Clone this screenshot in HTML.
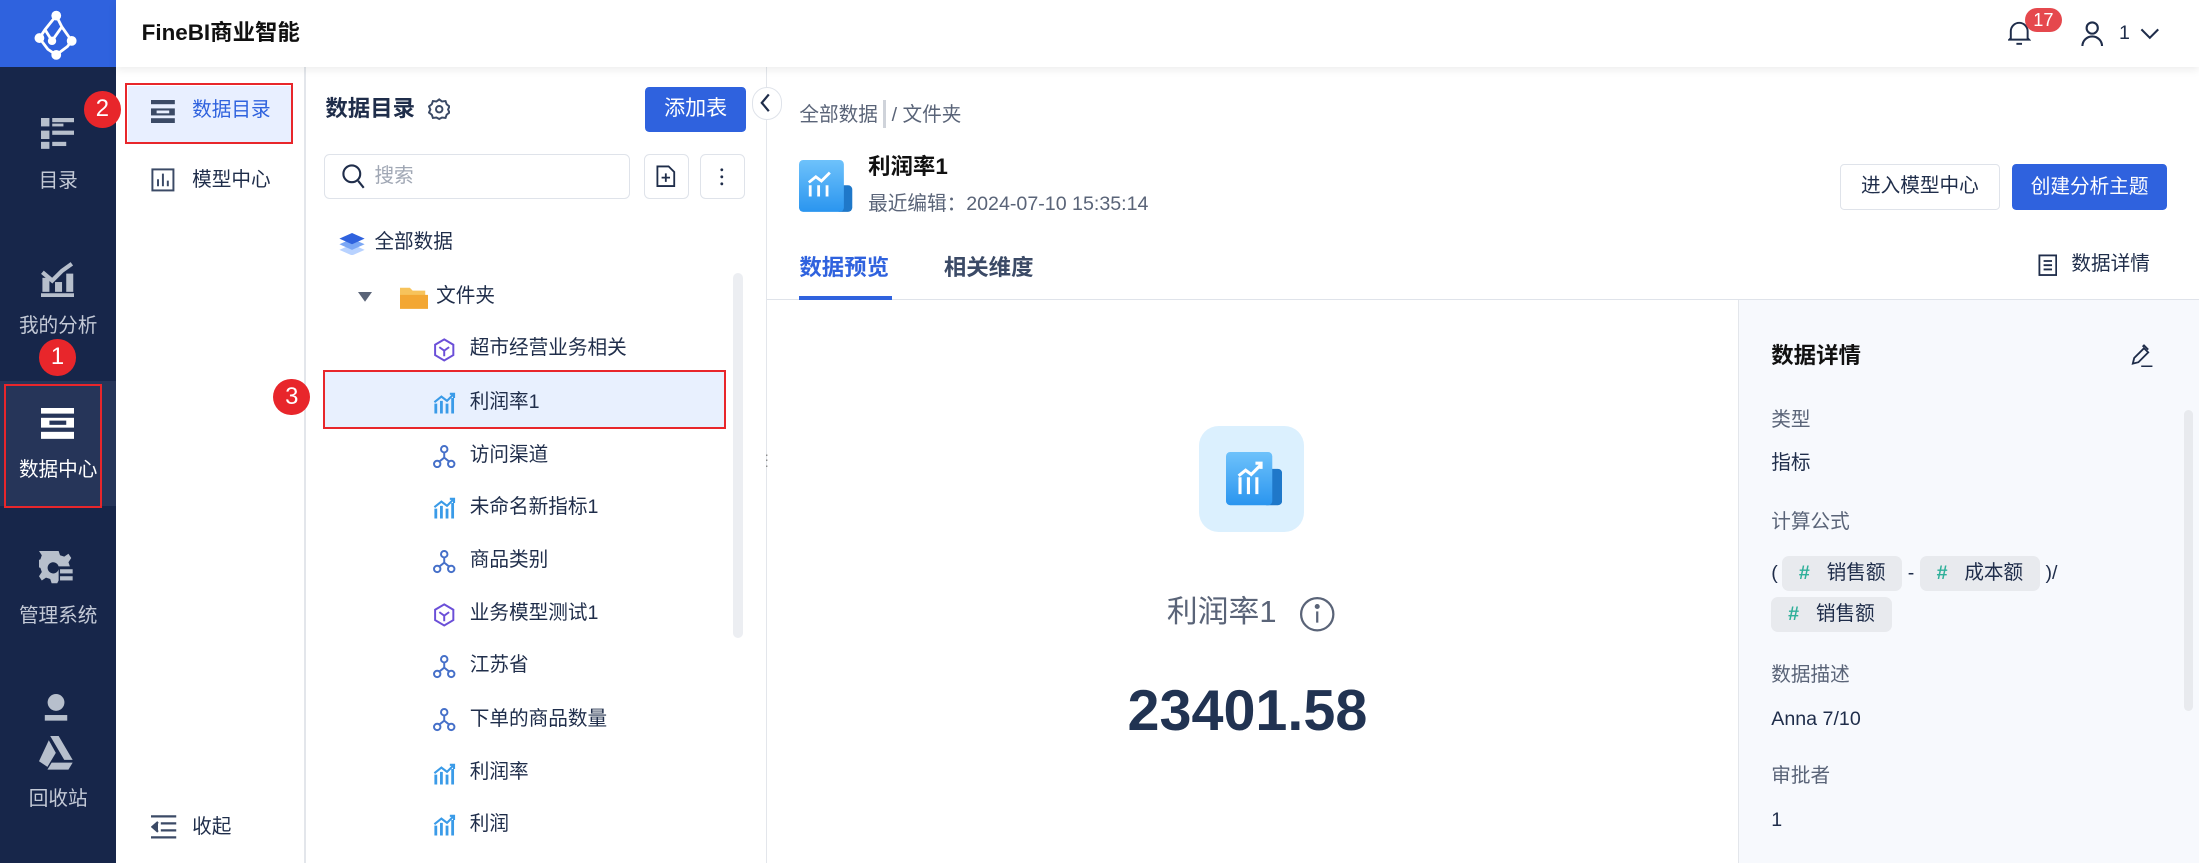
<!DOCTYPE html>
<html><head><meta charset="utf-8"><style>
html,body{margin:0;padding:0;width:2199px;height:863px;overflow:hidden;background:#fff}
#w{zoom:1.40242;width:1568px;height:615.4px;position:relative;font-family:"Liberation Sans","Noto Sans CJK SC",sans-serif;color:#1f2d4a;overflow:hidden}
.a{position:absolute}
.t{position:absolute;white-space:nowrap;line-height:1}
.nav{left:0;top:0;width:83px;height:616px;background:#17264a}
.navt{color:#c3c9d6;font-size:14px;width:83px;text-align:center;left:0}
.red{position:absolute;border:2px solid #e8262b;box-sizing:border-box}
.badge{position:absolute;width:26px;height:26px;border-radius:50%;background:#e8262b;color:#fff;font-size:17px;text-align:center;line-height:26px}
.row{font-size:14px;color:#1f2d4a}
.btn{position:absolute;box-sizing:border-box;border-radius:3px;font-size:14px;text-align:center}
.chip{display:inline-block;background:#e8eaee;border-radius:5px;padding:0 12px;height:25px;line-height:25px;font-size:14px;color:#1f2d4a;vertical-align:middle}
.chip b{color:#2fb09a;font-weight:bold;margin-right:12px}
</style></head><body><div id="w">
<div class="a nav"></div>
<div class="a" style="left:0;top:0;width:83px;height:48px;background:#2f62de"></div>
<svg class="a" style="left:22px;top:7px" width="36" height="36" viewBox="0 0 36 36" fill="none" stroke="#fff" stroke-width="2"><circle cx="18" cy="4" r="2.5" fill="#fff"/><circle cx="6" cy="20" r="2.5" fill="#fff"/><circle cx="29" cy="22" r="2.5" fill="#fff"/><circle cx="18" cy="32" r="2.5" fill="#fff"/><circle cx="15" cy="22" r="2" fill="#fff"/><path d="M18 4 L10 14 L6 20 L12 28 L18 32 L26 26 L29 22 L22 12 Z M10 14 L15 22 L22 12"/></svg>
<svg class="a" style="left:29px;top:84px" width="24" height="22" viewBox="0 0 24 22" fill="#b7bfcc"><rect x="0" y="0" width="6" height="6"/><rect x="8" y="0" width="16" height="3"/><rect x="8" y="4" width="8" height="2"/><rect x="0" y="9" width="6" height="6"/><rect x="8" y="9" width="16" height="3"/><rect x="0" y="17" width="6" height="5"/><rect x="8" y="17" width="10" height="3"/></svg>
<div class="t navt" style="top:123px">目录</div>
<svg class="a" style="left:29px;top:186px" width="24" height="26" viewBox="0 0 24 26" fill="#b7bfcc"><path d="M1 8 L8 14 L15 7 L22 2" stroke="#b7bfcc" stroke-width="3" fill="none"/><rect x="1" y="12" width="5" height="10"/><rect x="10" y="15" width="5" height="7"/><rect x="18" y="9" width="5" height="13"/><rect x="0" y="23" width="24" height="3"/></svg>
<div class="t navt" style="top:226px">我的分析</div>
<div class="a" style="left:0;top:272px;width:83px;height:89px;background:#263559"></div>
<svg class="a" style="left:29px;top:291px" width="24" height="22" viewBox="0 0 24 22" fill="#fff"><rect x="0" y="0" width="24" height="4"/><rect x="0" y="7" width="24" height="7"/><rect x="0" y="17" width="24" height="5"/><rect x="6" y="9" width="12" height="3" fill="#263559"/></svg>
<div class="t navt" style="top:329px;color:#fff">数据中心</div>
<svg class="a" style="left:28px;top:393px" width="24" height="24" viewBox="0 0 24 24" fill="#b7bfcc"><path d="M10 0h4l1 3 3 1 3-2 2 3-2 3 1 3h-8a4 4 0 1 0 0 2v8l-1 2h-4l-1-3-3-1-3 2-2-3 2-3-1-3-3-1v-4l3-1 1-3-2-3 3-2 3 2 3-1z"/><rect x="15" y="13" width="9" height="3"/><rect x="15" y="18" width="9" height="3"/></svg>
<div class="t navt" style="top:433px">管理系统</div>
<svg class="a" style="left:30px;top:495px" width="20" height="22" viewBox="0 0 20 22" fill="#b7bfcc"><circle cx="10" cy="6" r="6"/><rect x="2" y="15" width="16" height="4"/></svg>
<svg class="a" style="left:28px;top:525px" width="24" height="24" viewBox="0 0 24 24" fill="#b7bfcc"><path d="M8 0h6l10 17h-6z"/><path d="M7 3l5 9-6 10-6-4z"/><path d="M9 19h15l-3 5H6z"/></svg>
<div class="t navt" style="top:563px">回收站</div>
<div class="red" style="left:3px;top:274px;width:70px;height:88px"></div>
<div class="badge" style="left:28px;top:242px">1</div>
<div class="a" style="left:83px;top:0;width:1485px;height:48px;background:#fff;box-shadow:0 2px 6px rgba(0,0,0,.08);z-index:2"></div>
<div class="t" style="left:101px;top:16px;font-size:16px;font-weight:bold;color:#111;z-index:3">FineBI商业智能</div>
<svg class="a" style="left:1432px;top:14px;z-index:3" width="16" height="18" viewBox="0 0 16 18" fill="none" stroke="#1f2d4a" stroke-width="1.4"><path d="M2 13V8a6 6 0 0 1 12 0v5l1 1H1z"/><path d="M6 17h4"/></svg>
<div class="a" style="left:1444px;top:6px;width:26px;height:17px;border-radius:9px;background:#e5484d;color:#fff;font-size:13px;text-align:center;line-height:17px;z-index:3">17</div>
<svg class="a" style="left:1484px;top:15px;z-index:3" width="16" height="18" viewBox="0 0 16 18" fill="none" stroke="#1f2d4a" stroke-width="1.5"><circle cx="8" cy="5" r="4"/><path d="M1 18a7 7 0 0 1 14 0"/></svg>
<div class="t" style="left:1511px;top:17px;font-size:14px;z-index:3">1</div>
<svg class="a" style="left:1526px;top:20px;z-index:3" width="14" height="9" viewBox="0 0 14 9" fill="none" stroke="#1f2d4a" stroke-width="1.5"><path d="M1 1l6 6 6-6"/></svg>
<div class="a" style="left:217px;top:48px;width:1px;height:568px;background:#e3e6eb"></div>
<div class="a" style="left:91px;top:61px;width:117px;height:40px;background:#e8efff"></div>
<svg class="a" style="left:108px;top:71px" width="17" height="17" viewBox="0 0 17 17" fill="#3b4a66"><rect width="17" height="3"/><rect y="6" width="17" height="5"/><rect y="13" width="17" height="4"/><rect x="4" y="7.5" width="9" height="2" fill="#e8efff"/></svg>
<div class="t" style="left:137px;top:72px;font-size:14px;color:#2f62de">数据目录</div>
<div class="red" style="left:89px;top:59px;width:120px;height:44px"></div>
<div class="badge" style="left:60px;top:65px">2</div>
<svg class="a" style="left:108px;top:120px" width="17" height="17" viewBox="0 0 17 17" fill="none" stroke="#3b4a66" stroke-width="1.4"><rect x="1" y="1" width="15" height="15"/><path d="M5 13V8M8.5 13V4M12 13V9"/></svg>
<div class="t" style="left:137px;top:122px;font-size:14px">模型中心</div>
<svg class="a" style="left:108px;top:581px" width="18" height="17" viewBox="0 0 18 17" fill="none" stroke="#3b4a66" stroke-width="1.6"><path d="M0 1h18M7 6h11M7 11h11M0 16h18"/><path d="M5 5l-4 3.5 4 3.5" fill="#3b4a66"/></svg>
<div class="t" style="left:137px;top:583px;font-size:14px">收起</div>
<div class="a" style="left:546px;top:48px;width:1px;height:568px;background:#e3e6eb"></div>
<div class="t" style="left:232px;top:70px;font-size:16px;font-weight:bold">数据目录</div>
<svg class="a" style="left:305px;top:70px" width="16" height="16" viewBox="0 0 16 16" fill="none" stroke="#3b4a66" stroke-width="1.4"><path d="M8 1l2 1.5 2.5-.3.8 2.3 2 1.5-1 2.2 1 2.2-2 1.5-.8 2.3-2.5-.3L8 15l-2-1.1-2.5.3-.8-2.3-2-1.5 1-2.2-1-2.2 2-1.5.8-2.3 2.5.3z"/><circle cx="8" cy="8" r="2.3"/></svg>
<div class="btn" style="left:460px;top:62px;width:72px;height:32px;background:#2f62de;color:#fff;line-height:32px;font-size:15px">添加表</div>
<div class="a" style="left:536px;top:62px;width:20px;height:22px;border:1px solid #dfe3ea;border-radius:11px;background:#fff;z-index:3"></div>
<svg class="a" style="left:541px;top:66px;z-index:4" width="9" height="14" viewBox="0 0 9 14" fill="none" stroke="#1f2d4a" stroke-width="1.6"><path d="M7 1L2 7l5 6"/></svg>
<div class="a" style="left:231px;top:110px;width:218px;height:32px;border:1px solid #dfe3ea;border-radius:4px;box-sizing:border-box"></div>
<svg class="a" style="left:244px;top:117px" width="17" height="18" viewBox="0 0 17 18" fill="none" stroke="#1f2d4a" stroke-width="1.5"><circle cx="7" cy="7" r="6"/><path d="M11.5 12l4 5"/></svg>
<div class="t" style="left:267px;top:119px;font-size:14px;color:#a0a7b4">搜索</div>
<div class="a" style="left:459px;top:110px;width:32px;height:32px;border:1px solid #dfe3ea;border-radius:4px;box-sizing:border-box"></div>
<svg class="a" style="left:468px;top:118px" width="14" height="16" viewBox="0 0 14 16" fill="none" stroke="#1f2d4a" stroke-width="1.3"><path d="M1 1h8l4 4v10H1z"/><path d="M7 6v6M4 9h6"/></svg>
<div class="a" style="left:499px;top:110px;width:32px;height:32px;border:1px solid #dfe3ea;border-radius:4px;box-sizing:border-box"></div>
<svg class="a" style="left:513px;top:119px" width="4" height="14" viewBox="0 0 4 14" fill="#1f2d4a"><circle cx="2" cy="2" r="1"/><circle cx="2" cy="7" r="1"/><circle cx="2" cy="12" r="1"/></svg>
<svg class="a" style="left:241px;top:166px" width="20" height="16" viewBox="0 0 20 16"><path d="M10 8L1 12l9 4 9-4z" fill="#b8d2ff"/><path d="M10 4L1 8l9 4 9-4z" fill="#7ba7f5"/><path d="M10 0L1 4l9 4 9-4z" fill="#2f62de"/></svg>
<div class="t row" style="left:267px;top:166px">全部数据</div>
<svg class="a" style="left:255px;top:208px" width="10" height="7" viewBox="0 0 10 7" fill="#5a6478"><path d="M0 0h10L5 7z"/></svg>
<svg class="a" style="left:285px;top:203px" width="20" height="18" viewBox="0 0 20 18"><path d="M0 2h7l2 2h9v12H0z" fill="#f7c35b"/><path d="M0 7h20v10H0z" fill="#f3a733"/></svg>
<div class="t row" style="left:311px;top:205px">文件夹</div>
<div class="a" style="left:231px;top:265px;width:286px;height:40px;background:#e8f0fe"></div>
<div class="red" style="left:230px;top:264px;width:288px;height:42px"></div>
<div class="badge" style="left:195px;top:270px">3</div>
<div class="a" style="left:523px;top:195px;width:7px;height:260px;border-radius:4px;background:#eceef2"></div>
<div class="a" style="left:545px;top:322px;font-size:10px;color:#888;line-height:4px">·<br>·<br>·</div>
<div class="t" style="left:570px;top:71px;font-size:14px;color:#5a6478">全部数据 <span style="display:inline-block;width:2px;height:20px;background:#cfd3da;vertical-align:-5px"></span> / 文件夹</div>
<svg class="a" style="left:570px;top:114px" width="38" height="37" viewBox="0 0 38 37"><rect x="26" y="18" width="12" height="19" rx="3" fill="#1f78c9"/><defs><linearGradient id="g" x1="0" y1="0" x2="0" y2="1"><stop offset="0" stop-color="#6ec2fb"/><stop offset="1" stop-color="#2a95ef"/></linearGradient></defs><rect x="0" y="0" width="32" height="37" rx="3" fill="url(#g)"/><path d="M8 26v-8M14 26v-8M20 26v-8M7 16l5-4 4 3 6-6" stroke="#fff" stroke-width="2" fill="none"/></svg>
<div class="t" style="left:619px;top:111px;font-size:16px;font-weight:bold;color:#111">利润率1</div>
<div class="t" style="left:619px;top:139px;font-size:14px;color:#5a6478">最近编辑：2024-07-10 15:35:14</div>
<div class="btn" style="left:1312px;top:117px;width:114px;height:33px;border:1px solid #dfe3ea;line-height:31px;color:#1f2d4a">进入模型中心</div>
<div class="btn" style="left:1435px;top:117px;width:110px;height:33px;background:#2f62de;color:#fff;line-height:33px">创建分析主题</div>
<div class="t" style="left:570px;top:183px;font-size:16px;font-weight:bold;color:#2f62de">数据预览</div>
<div class="t" style="left:673px;top:183px;font-size:16px;font-weight:bold;color:#3b4a66">相关维度</div>
<div class="a" style="left:547px;top:213px;width:1021px;height:1px;background:#dfe3ea"></div>
<div class="a" style="left:570px;top:211px;width:66px;height:3px;background:#2f62de"></div>
<svg class="a" style="left:1453px;top:181px" width="14" height="16" viewBox="0 0 14 16" fill="none" stroke="#1f2d4a" stroke-width="1.3"><rect x="1" y="1" width="12" height="14"/><path d="M4 5h6M4 8h6M4 11h6"/></svg>
<div class="t" style="left:1477px;top:182px;font-size:14px">数据详情</div>
<div class="a" style="left:1239px;top:214px;width:329px;height:402px;background:#f7f9fd;border-left:1px solid #e3e6eb"></div>
<div class="a" style="left:855px;top:304px;width:75px;height:75px;border-radius:14px;background:#dbf0fe"></div>
<svg class="a" style="left:874px;top:322px" width="40" height="40" viewBox="0 0 40 40"><rect x="26" y="12" width="14" height="26" rx="3" fill="#1f78c9"/><rect x="0" y="0" width="33" height="38" rx="3" fill="url(#g)"/><path d="M10 30v-12M16 30v-12M22 30v-12M9 17l5-4 4 3 7-7M21 8h4v4" stroke="#fff" stroke-width="2.2" fill="none"/></svg>
<div class="t" style="left:832px;top:426px;font-size:22px;color:#5a6478">利润率1</div>
<svg class="a" style="left:926px;top:425px" width="26" height="26" viewBox="0 0 26 26" fill="none" stroke="#5a6478" stroke-width="1.6"><circle cx="13" cy="13" r="11.5"/><path d="M13 11v8"/><circle cx="13" cy="7.5" r="1" fill="#5a6478"/></svg>
<div class="t" style="left:804px;top:487px;font-size:41px;font-weight:bold;color:#213352">23401.58</div>
<div class="t" style="left:1263px;top:246px;font-size:16px;font-weight:bold;color:#111">数据详情</div>
<svg class="a" style="left:1519px;top:245px" width="17" height="17" viewBox="0 0 17 17" fill="none" stroke="#1f2d4a" stroke-width="1.3"><path d="M2 14l1-4 7-7 3 3-7 7zM9 2l1-1 3 3M8 16h8"/></svg>
<div class="t" style="left:1263px;top:293px;font-size:14px;color:#5a6478">类型</div>
<div class="t" style="left:1263px;top:324px;font-size:14px">指标</div>
<div class="t" style="left:1263px;top:366px;font-size:14px;color:#5a6478">计算公式</div>
<div class="a" style="left:1263px;top:394px;font-size:14px;width:270px;line-height:29px">(<span class="chip" style="margin-left:3px"><b>#</b>销售额</span> - <span class="chip"><b>#</b>成本额</span> )/<br><span class="chip"><b>#</b>销售额</span></div>
<div class="t" style="left:1263px;top:475px;font-size:14px;color:#5a6478">数据描述</div>
<div class="t" style="left:1263px;top:506px;font-size:14px">Anna 7/10</div>
<div class="t" style="left:1263px;top:547px;font-size:14px;color:#5a6478">审批者</div>
<div class="t" style="left:1263px;top:578px;font-size:14px">1</div>
<div class="a" style="left:1557px;top:292px;width:7px;height:215px;border-radius:4px;background:#e8eaee"></div>
<svg width="0" height="0" style="position:absolute"><defs>
<g id="cube" fill="none" stroke="#6b4fd8" stroke-width="1.4"><path d="M8 1l6.5 3.8v7.4L8 16l-6.5-3.8V4.8z"/><path d="M4.5 6.5L8 9l3.5-2.5M8 9v4"/></g>
<g id="bar"><path d="M2 16V9M6 16V7M10 16V9M14 16V5" stroke="#3a9be8" stroke-width="2"/><path d="M1 8l5-4 4 3 5-5M12 2h3v3" stroke="#3a9be8" stroke-width="1.5" fill="none"/></g>
<g id="node" fill="none" stroke="#4670c9" stroke-width="1.4"><circle cx="8" cy="3" r="2.3"/><circle cx="3" cy="13.5" r="2.3"/><circle cx="13" cy="13.5" r="2.3"/><path d="M8 5.3V9L4.5 11.8M8 9l3.5 2.8"/></g>
</defs></svg>
<div class="a" style="left:309px;top:241px"><svg width="16" height="17"><use href="#cube"/></svg></div><div class="t row" style="left:335px;top:242px">超市经营业务相关</div>
<div class="a" style="left:309px;top:279px"><svg width="16" height="17"><use href="#bar"/></svg></div><div class="t row" style="left:335px;top:280px">利润率1</div>
<div class="a" style="left:309px;top:317px"><svg width="16" height="17"><use href="#node"/></svg></div><div class="t row" style="left:335px;top:318px">访问渠道</div>
<div class="a" style="left:309px;top:354px"><svg width="16" height="17"><use href="#bar"/></svg></div><div class="t row" style="left:335px;top:355px">未命名新指标1</div>
<div class="a" style="left:309px;top:392px"><svg width="16" height="17"><use href="#node"/></svg></div><div class="t row" style="left:335px;top:393px">商品类别</div>
<div class="a" style="left:309px;top:430px"><svg width="16" height="17"><use href="#cube"/></svg></div><div class="t row" style="left:335px;top:431px">业务模型测试1</div>
<div class="a" style="left:309px;top:467px"><svg width="16" height="17"><use href="#node"/></svg></div><div class="t row" style="left:335px;top:468px">江苏省</div>
<div class="a" style="left:309px;top:505px"><svg width="16" height="17"><use href="#node"/></svg></div><div class="t row" style="left:335px;top:506px">下单的商品数量</div>
<div class="a" style="left:309px;top:543px"><svg width="16" height="17"><use href="#bar"/></svg></div><div class="t row" style="left:335px;top:544px">利润率</div>
<div class="a" style="left:309px;top:580px"><svg width="16" height="17"><use href="#bar"/></svg></div><div class="t row" style="left:335px;top:581px">利润</div>
</div></body></html>
